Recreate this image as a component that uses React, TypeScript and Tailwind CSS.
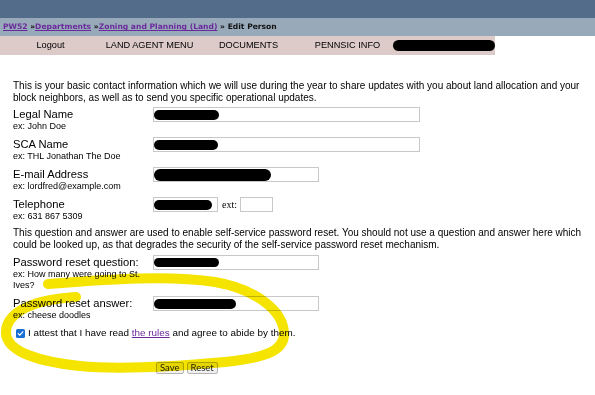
import React from "react";

function Blob({ w, h }: { w: number; h: number }) {
  return <span className="block bg-black rounded-full shrink-0" style={{ width: w, height: h }} />;
}

function Field({ w, blob, bh = 10 }: { w: number; blob?: number; bh?: number }) {
  return (
    <div className="h-[15px] border border-[#c8c8c8] bg-white flex items-center" style={{ width: w }}>
      {blob ? <Blob w={blob} h={bh} /> : null}
    </div>
  );
}

function Row({
  label,
  ex,
  children,
  className = "",
}: {
  label: string;
  ex: React.ReactNode;
  children: React.ReactNode;
  className?: string;
}) {
  return (
    <div className={"flex " + className}>
      <div className="w-[140px] shrink-0">
        <div className="text-[11.2px] leading-[13px] pt-[1px]">{label}</div>
        <div className="text-[9px] leading-[11px]">{ex}</div>
      </div>
      <div className="flex items-start">{children}</div>
    </div>
  );
}

export default function App() {
  const menu = ["Logout", "LAND AGENT MENU", "DOCUMENTS", "PENNSIC INFO"];
  return (
    <div className="relative w-[595px] h-[395px] overflow-hidden bg-white text-black font-['Liberation_Sans',Arial,sans-serif]">
      <div className="h-[18px] bg-[#536c89]" />
      <div className="h-[18px] bg-[#98a9ba] flex items-center pl-[3px] whitespace-pre font-['DejaVu_Sans',Verdana,sans-serif] font-bold text-[7.6px] text-[#111]">
        <a className="text-[#6b2a9c] underline">PW52</a>
        <span> »</span>
        <a className="text-[#6b2a9c] underline">Departments</a>
        <span> »</span>
        <a className="text-[#6b2a9c] underline">Zoning and Planning (Land)</a>
        <span> » Edit Person</span>
      </div>
      <div className="flex w-[495px] h-[19px] bg-[#dccbc9] text-[9.2px] items-center">
        {menu.map((m) => (
          <div key={m} className="w-[99px] flex justify-center items-center pl-[2px]">
            {m}
          </div>
        ))}
        <span className="block w-[102px] h-[11px] ml-[-3px] bg-black rounded-full" />
      </div>

      <div className="pl-[13px] pt-[25px]">
        <p className="text-[10px] leading-[12px] whitespace-nowrap">
          This is your basic contact information which we will use during the year to share updates with you about land allocation and your
          <br />
          block neighbors, as well as to send you specific operational updates.
        </p>

        <Row label="Legal Name" ex="ex: John Doe" className="mt-[3px] mb-[5px]">
          <Field w={267} blob={65} />
        </Row>
        <Row label="SCA Name" ex="ex: THL Jonathan The Doe" className="mb-[5px]">
          <Field w={267} blob={64} />
        </Row>
        <Row label="E-mail Address" ex="ex: lordfred@example.com" className="mb-[5px]">
          <Field w={166} blob={117} bh={12} />
        </Row>
        <Row label="Telephone" ex="ex: 631 867 5309" className="mb-[5px]">
          <Field w={65} blob={58} />
          <span className="ml-[4px] mr-[3px] font-['Liberation_Serif','Times_New_Roman',serif] text-[10px] leading-[15px]">ext:</span>
          <Field w={33} />
        </Row>

        <p className="text-[10px] leading-[12px] whitespace-nowrap">
          This question and answer are used to enable self-service password reset. You should not use a question and answer here which
          <br />
          could be looked up, as that degrades the security of the self-service password reset mechanism.
        </p>

        <Row
          label="Password reset question:"
          ex={
            <>
              ex: How many were going to St.
              <br />
              Ives?
            </>
          }
          className="mt-[4px] mb-[5px]"
        >
          <Field w={166} blob={65} bh={9} />
        </Row>
        <Row label="Password reset answer:" ex="ex: cheese doodles">
          <Field w={166} blob={82} />
        </Row>

        <div className="mt-[6px] flex items-center text-[9.9px] leading-[12px]">
          <span className="ml-[3px] mr-[3px] w-[9px] h-[9px] rounded-[1.5px] bg-[#1a6fd6] flex items-center justify-center">
            <svg width="7" height="7" viewBox="0 0 10 10">
              <path d="M1.8 5.2 L4 7.4 L8.3 2.6" stroke="white" strokeWidth="1.8" fill="none" strokeLinecap="round" strokeLinejoin="round" />
            </svg>
          </span>
          <span>
            I attest that I have read <a className="text-[#6b2a9c] underline">the rules</a> and agree to abide by them.
          </span>
        </div>

        <div className="mt-[23px] ml-[143px] flex gap-[3px] font-['Lato',sans-serif] text-[9.5px]">
          <button className="h-[12px] px-[3px] leading-[10px] bg-[#f0f0f0] border border-[#b4b4b4] rounded-[2px] text-[#222]">Save</button>
          <button className="h-[12px] px-[3px] leading-[10px] bg-[#f0f0f0] border border-[#b4b4b4] rounded-[2px] text-[#222]">Reset</button>
        </div>
      </div>

      <svg className="absolute left-0 top-0 pointer-events-none mix-blend-multiply" width="595" height="395" viewBox="0 0 595 395">
        <path
          d="M 48 284 C 110 279, 170 275, 215 282 C 255 289, 283 310, 284 333 C 285 352, 262 358, 225 362 C 180 366, 120 370, 80 366 C 40 362, 8 352, 6 334 C 5 316, 25 300, 76 297"
          stroke="#f5e400"
          strokeWidth="10"
          fill="none"
          strokeLinecap="round"
        />
      </svg>
    </div>
  );
}
